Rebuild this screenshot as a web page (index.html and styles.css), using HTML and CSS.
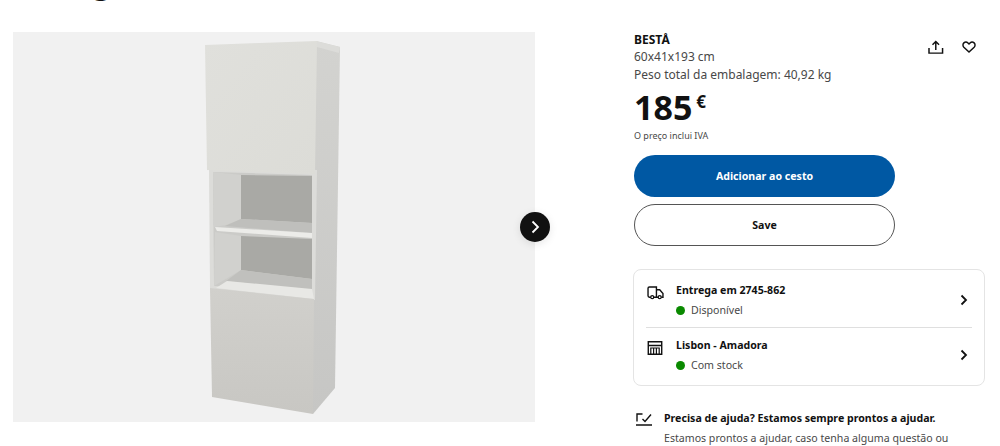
FILE: index.html
```html
<!DOCTYPE html>
<html lang="pt">
<head>
  <meta charset="UTF-8" />
  <meta name="viewport" content="width=device-width, initial-scale=1.0" />
  <title>BESTÅ</title>
  <link rel="stylesheet" href="styles.css">
</head>
<body>

<h1 class="page-title">Imagens</h1>

<main class="product">
  <section class="gallery">
    <svg class="cabinet" viewBox="0 0 522 390" width="522" height="390" aria-label="Armário BESTÅ">
      <defs>
        <linearGradient id="doorTop" x1="0" y1="0" x2="1" y2="1">
          <stop offset="0" stop-color="#e0e0dc"/>
          <stop offset="1" stop-color="#dcdcd7"/>
        </linearGradient>
        <linearGradient id="doorBottom" x1="0" y1="0" x2="0" y2="1">
          <stop offset="0" stop-color="#d1d0cc"/>
          <stop offset="1" stop-color="#c8c7c3"/>
        </linearGradient>
        <linearGradient id="side" x1="0" y1="0" x2="0" y2="1">
          <stop offset="0" stop-color="#d3d3d0"/>
          <stop offset="1" stop-color="#c6c6c4"/>
        </linearGradient>
        <filter id="soft"><feGaussianBlur stdDeviation="0.5"/></filter>
      </defs>
      <g transform="translate(-13 -32)" filter="url(#soft)">
        <polygon points="316,41 340,47 335,388 313,414 300,300 303,60" fill="url(#side)"/>
        <polygon points="316,41 340,47 339,53 317,47" fill="#dcdcd9"/>
        <polygon points="209,168 317,170 315,300 210,290" fill="#dcdcd9"/>
        <polygon points="213,172 312,175 312,291 214,286" fill="#cbcbc8"/>
        <polygon points="213,172 241,175 241,219 226,225 214,227" fill="#d1d1ce"/>
        <polygon points="241,175 312,176 312,223 241,219" fill="#a9a9a5"/>
        <polygon points="241,219 312,223 312,233 225,226" fill="#bfbfbc"/>
        <polygon points="215,227 312,233 312,238 217,231" fill="#ecece9"/>
        <polygon points="215,232 241,236 241,270 219,283 214,286" fill="#d1d1ce"/>
        <polygon points="241,236 312,239 312,279 241,270" fill="#a9a9a5"/>
        <polygon points="241,270 312,279 312,290 226,281" fill="#c0c0bd"/>
        <polygon points="216,288 227,281 312,289 314,299" fill="#e8e8e5"/>
        <polygon points="205,45 317,41 315,174 207,170" fill="url(#doorTop)"/>
        <polygon points="210,288 314,299 313,414 212,397" fill="url(#doorBottom)"/>
      </g>
    </svg>
    <button class="next" aria-label="Seguinte">
      <svg viewBox="0 0 24 24" width="24" height="24"><path d="M9.500 6.500 15 12l-5.500 5.500" fill="none" stroke="#fff" stroke-width="1.800"/></svg>
    </button>
  </section>

  <section class="info">
    <div class="head">
      <div class="head-text">
        <div class="name">BESTÅ</div>
        <div class="desc">60x41x193 cm</div>
        <div class="desc">Peso total da embalagem: 40,92 kg</div>
      </div>
      <div class="actions">
        <svg viewBox="0 0 18 16" width="16" height="14"><path d="M1 9v6h15.500V9M8.750 11.500V2M5 5.500 8.750 1.800l3.750 3.700" fill="none" stroke="#111" stroke-width="1.700"/></svg>
        <svg viewBox="0 0 16 14" width="14" height="12"><path d="M8 12.800 2 7.200C.6 5.800.6 3.500 2 2.200c1.400-1.300 3.500-1.200 4.800.1L8 3.500l1.200-1.200c1.300-1.300 3.400-1.400 4.800-.1 1.400 1.300 1.400 3.600 0 5z" fill="none" stroke="#111" stroke-width="1.700"/></svg>
      </div>
    </div>

    <div class="price">185<span class="currency">€</span></div>
    <div class="vat">O preço inclui IVA</div>

    <button class="btn btn-primary">Adicionar ao cesto</button>
    <button class="btn btn-outline">Save</button>

    <div class="stock-card">
      <div class="stock-row">
        <span class="stock-icon">
          <svg viewBox="0 0 18 15" width="17" height="14"><path d="M4 12H2.500A1.500 1.500 0 0 1 1 10.500V2.500A1.500 1.500 0 0 1 2.500 1h7.500v11H7M10 4h3.500l3.500 4v4h-1.800M10 12h2" fill="none" stroke="#111" stroke-width="1.500"/><circle cx="5.500" cy="12" r="1.600" fill="none" stroke="#111" stroke-width="1.400"/><circle cx="13.500" cy="12" r="1.600" fill="none" stroke="#111" stroke-width="1.400"/></svg>
        </span>
        <div class="stock-text">
          <div class="stock-title">Entrega em 2745-862</div>
          <div class="stock-status"><span class="dot"></span>Disponível</div>
        </div>
        <svg class="chevron" viewBox="0 0 8 12" width="8" height="12"><path d="M1.500 1.500 6 6l-4.500 4.500" fill="none" stroke="#111" stroke-width="1.800"/></svg>
      </div>
      <div class="stock-row">
        <span class="stock-icon">
          <svg viewBox="0 0 16 15" width="16" height="14"><path d="M.8.800h14.400v13.400H.8zM.8 4.800h14.400" fill="none" stroke="#111" stroke-width="1.500"/><path d="M3.500 14V7.500h9V14M6.500 8v6M9.500 8v6" fill="none" stroke="#111" stroke-width="1.300"/></svg>
        </span>
        <div class="stock-text">
          <div class="stock-title">Lisbon - Amadora</div>
          <div class="stock-status"><span class="dot"></span>Com stock</div>
        </div>
        <svg class="chevron" viewBox="0 0 8 12" width="8" height="12"><path d="M1.500 1.500 6 6l-4.500 4.500" fill="none" stroke="#111" stroke-width="1.800"/></svg>
      </div>
    </div>

    <div class="help">
      <svg class="help-icon" viewBox="0 0 16 13" width="16" height="13"><path d="M6.500 1H1v7.500M6.500 6l2.500 2.500L15 1.500M0 12h16" fill="none" stroke="#111" stroke-width="1.400"/></svg>
      <div>
        <div class="help-title">Precisa de ajuda? Estamos sempre prontos a ajudar.</div>
        <div class="help-text">Estamos prontos a ajudar, caso tenha alguma questão ou</div>
      </div>
    </div>
  </section>
</main>

</body>
</html>
```

FILE: styles.css
```css
html, body {
  margin: 0;
  padding: 0;
}

body {
  font-family: "Noto Sans", "Open Sans", sans-serif;
  background: #fff;
  color: #111;
  height: 446px;
  overflow: hidden;
}

.page-title {
  margin: -33px 0 0 38px;
  height: 33px;
  font-size: 28px;
  line-height: 33px;
  font-weight: 700;
}

.product {
  display: flex;
  padding: 32px 15px 0 13px;
}

.gallery {
  position: relative;
  width: 522px;
  height: 390px;
  background: #f1f1f1;
  flex: none;
}

.cabinet {
  display: block;
}

.next {
  position: absolute;
  top: 180px;
  right: -15px;
  width: 30px;
  height: 30px;
  padding: 3px;
  border: none;
  border-radius: 50%;
  background: #111;
  box-shadow: 0 2px 8px rgba(0,0,0,0.1);
}

.next svg {
  display: block;
}

.info {
  margin-left: 99px;
  flex: 1;
}

.head {
  display: flex;
  justify-content: space-between;
}

.name {
  font-size: 12px;
  line-height: 16px;
  font-weight: 700;
}

.desc {
  font-size: 12px;
  line-height: 18px;
  color: #484848;
}

.actions {
  display: flex;
  align-items: center;
  gap: 18px;
  height: 16px;
  margin: 7px 9px 0 0;
}

.price {
  font-size: 34px;
  line-height: 40px;
  font-weight: 700;
  margin-top: 3px;
}

.currency {
  font-size: 17px;
  line-height: 1;
  margin-left: 4px;
  vertical-align: 12px;
}

.vat {
  font-size: 9px;
  line-height: 14px;
  color: #484848;
  margin-top: 2px;
}

.btn {
  display: block;
  width: 261px;
  height: 42px;
  border-radius: 21px;
  font-family: inherit;
  font-size: 10.600px;
  font-weight: 700;
  padding: 0;
}

.btn-primary {
  margin-top: 12px;
  background: #0058a3;
  color: #fff;
  border: none;
}

.btn-outline {
  margin-top: 7px;
  background: #fff;
  color: #111;
  border: 1px solid #555;
}

.stock-card {
  margin: 23px 0 0 -1px;
  width: 352px;
  height: 117px;
  box-sizing: border-box;
  padding: 0 12px;
  border: 1px solid #e4e4e4;
  border-radius: 8px;
}

.stock-row {
  display: flex;
  align-items: center;
  box-sizing: border-box;
  height: 57px;
  padding: 12px 0 9px;
}

.stock-row + .stock-row {
  border-top: 1px solid #dfdfdf;
  height: 58px;
  padding: 9px 0 12px;
}

.stock-icon {
  flex: none;
  align-self: flex-start;
  width: 18px;
  height: 16px;
  padding-left: 1px;
  margin-top: 1px;
}

.stock-text {
  flex: 1;
  margin-left: 11px;
}

.stock-title {
  font-size: 10.600px;
  line-height: 16px;
  font-weight: 700;
}

.stock-status {
  display: flex;
  align-items: center;
  gap: 6px;
  margin-top: 4px;
  font-size: 10.600px;
  line-height: 16px;
  color: #484848;
}

.dot {
  width: 9px;
  height: 9px;
  border-radius: 50%;
  background: #0a8a00;
}

.chevron {
  margin-right: 4px;
}

.help {
  display: flex;
  gap: 12px;
  margin: 24px 0 0 2px;
}

.help-icon {
  flex: none;
  margin-top: 3px;
}

.help-title {
  font-size: 10.600px;
  line-height: 16px;
  font-weight: 700;
}

.help-text {
  font-size: 10.600px;
  line-height: 16px;
  color: #484848;
  margin-top: 4px;
}
```
